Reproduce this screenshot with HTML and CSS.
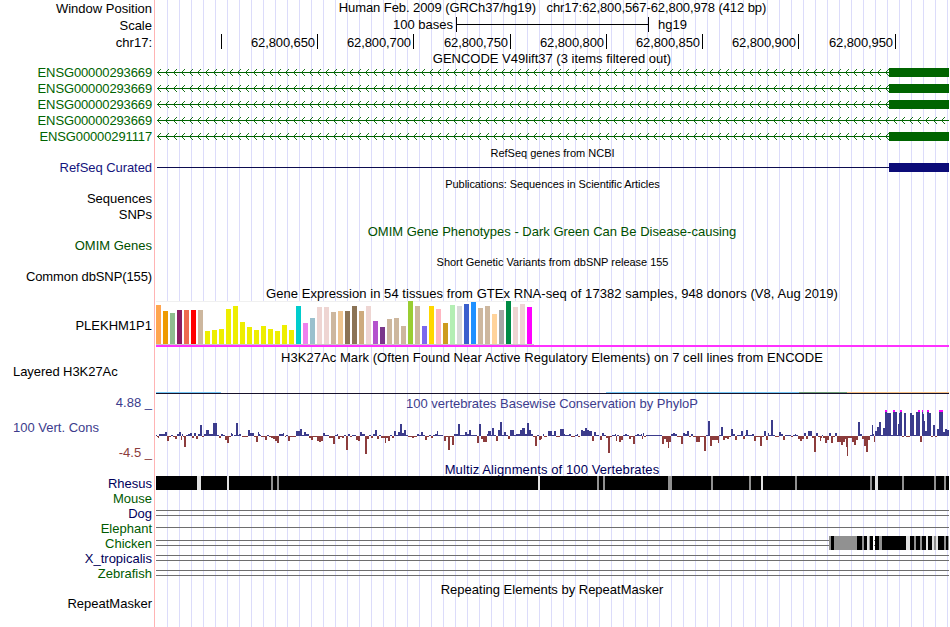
FILE: index.html
```html
<!DOCTYPE html>
<html lang="en">
<head>
<meta charset="utf-8">
<title>Genome Browser hg19 chr17</title>
<link rel="stylesheet" href="styles.css">
</head>
<body>
<svg class="defs" width="0" height="0">
  <defs>
    <pattern id="arrows" x="157" y="0" width="8" height="16" patternUnits="userSpaceOnUse">
      <path d="M4 4L.5 7.5l3.5 3.500" fill="none" stroke="#006400" stroke-width=".9"/>
    </pattern>
    <g id="intron">
      <rect x="157" y="3" width="792" height="9" fill="url(#arrows)"/>
      <path d="M157 7.5H949" stroke="#006400"/>
    </g>
    <g id="exon"><rect x="889" y="3" width="60" height="9"/></g>
    <path id="gap" d="M156 4.5H949M156 9.5H949" stroke="#6e6e6e"/>
  </defs>
</svg>
<main class="browser">
  <div class="row h17"><div class="label">Window Position</div><div class="track title pos">Human Feb. 2009 (GRCh37/hg19) &nbsp; chr17:62,800,567-62,800,978 (412 bp)</div></div>
  <div class="row h17"><div class="label">Scale</div><div class="track">
    <svg viewBox="155 0 794 17"><path d="M456.5 0V15M648.5 0V15M456 7.500H649" stroke="#000"/><text x="453" y="12" text-anchor="end">100 bases</text><text x="658" y="12">hg19</text></svg></div></div>
  <div class="row h17"><div class="label">chr17:</div><div class="track">
    <svg viewBox="155 0 794 17"><path d="M221.500 0v15M317.500 0v15M413.500 0v15M510.500 0v15M606.500 0v15M702.500 0v15M798.500 0v15M895.500 0v15" stroke="#000"/>
    <g class="coords" text-anchor="end"><text x="315" y="13">62,800,650</text><text x="411" y="13">62,800,700</text><text x="508" y="13">62,800,750</text><text x="604" y="13">62,800,800</text><text x="700" y="13">62,800,850</text><text x="796" y="13">62,800,900</text><text x="893" y="13">62,800,950</text></g></svg></div></div>
  <div class="row h14"><div class="label"></div><div class="track title">GENCODE V49lift37 (3 items filtered out)</div></div>
  <div class="row h16 gene"><div class="label">ENSG00000293669</div><div class="track"><svg viewBox="155 0 794 16"><use href="#intron"/><use href="#exon"/></svg></div></div>
  <div class="row h16 gene"><div class="label">ENSG00000293669</div><div class="track"><svg viewBox="155 0 794 16"><use href="#intron"/><use href="#exon"/></svg></div></div>
  <div class="row h16 gene"><div class="label">ENSG00000293669</div><div class="track"><svg viewBox="155 0 794 16"><use href="#intron"/><use href="#exon"/></svg></div></div>
  <div class="row h16 gene"><div class="label">ENSG00000293669</div><div class="track"><svg viewBox="155 0 794 16"><use href="#intron"/></svg></div></div>
  <div class="row h16 gene"><div class="label">ENSG00000291117</div><div class="track"><svg viewBox="155 0 794 16"><use href="#intron"/><use href="#exon"/></svg></div></div>
  <div class="row h15"><div class="label"></div><div class="track title small">RefSeq genes from NCBI</div></div>
  <div class="row h16 refseq"><div class="label">RefSeq Curated</div><div class="track"><svg viewBox="155 0 794 16"><path d="M157 7.500H949" stroke="#0c0c50"/><use href="#exon"/></svg></div></div>
  <div class="row h15"><div class="label"></div><div class="track title small tight">Publications: Sequences in Scientific Articles</div></div>
  <div class="row h16"><div class="label">Sequences</div><div class="track"></div></div>
  <div class="row h15"><div class="label">SNPs</div><div class="track"></div></div>
  <div class="row h16 omim"><div class="label"></div><div class="track title lower">OMIM Gene Phenotypes - Dark Green Can Be Disease-causing</div></div>
  <div class="row h16 omim"><div class="label">OMIM Genes</div><div class="track"></div></div>
  <div class="row h15"><div class="label"></div><div class="track title small snp-title">Short Genetic Variants from dbSNP release 155</div></div>
  <div class="row h16"><div class="label snp">Common dbSNP(155)</div><div class="track"></div></div>
  <div class="row h16"><div class="label"></div><div class="track title wide">Gene Expression in 54 tissues from GTEx RNA-seq of 17382 samples, 948 donors (V8, Aug 2019)</div></div>
  <div class="row h48"><div class="label">PLEKHM1P1</div><div class="track"><svg id="gtex" viewBox="155 0 794 48"></svg></div></div>
  <div class="row h16"><div class="label"></div><div class="track title wide">H3K27Ac Mark (Often Found Near Active Regulatory Elements) on 7 cell lines from ENCODE</div></div>
  <div class="row h29"><div class="label start">Layered H3K27Ac</div><div class="track"><svg viewBox="155 0 794 29">
    <path d="M156 27.500H221M606 27.500H799" stroke="#73c6f5"/><path d="M799 27.500H847" stroke="#6d9c76"/><path d="M847 27.500H949" stroke="#f5be82"/><path d="M156 28.500H949" stroke="#17122a"/></svg></div></div>
  <div class="row h17 cons"><div class="label">4.88 _</div><div class="track title low">100 vertebrates Basewise Conservation by PhyloP</div></div>
  <div class="row h50 cons"><div class="label stack"><span class="name">100 Vert. Cons</span><span class="min">-4.5 _</span></div><div class="track"><svg id="phylop" viewBox="155 0 794 50"></svg></div></div>
  <div class="row h15 navy"><div class="label"></div><div class="track title low multiz">Multiz Alignments of 100 Vertebrates</div></div>
  <div class="row h15 navy"><div class="label">Rhesus</div><div class="track"><svg id="rhesus" viewBox="155 0 794 15"></svg></div></div>
  <div class="row h15 green"><div class="label">Mouse</div><div class="track"></div></div>
  <div class="row h15 navy"><div class="label">Dog</div><div class="track"><svg viewBox="155 0 794 15"><use href="#gap"/></svg></div></div>
  <div class="row h15 green"><div class="label">Elephant</div><div class="track"><svg viewBox="155 0 794 15"><path d="M156 6.500H949" stroke="#6e6e6e"/></svg></div></div>
  <div class="row h15 green"><div class="label">Chicken</div><div class="track"><svg id="chicken" viewBox="155 0 794 15"><use href="#gap"/></svg></div></div>
  <div class="row h15 navy"><div class="label">X_tropicalis</div><div class="track"><svg viewBox="155 0 794 15"><use href="#gap"/></svg></div></div>
  <div class="row h15 green"><div class="label">Zebrafish</div><div class="track"><svg viewBox="155 0 794 15"><use href="#gap"/></svg></div></div>
  <div class="row h15"><div class="label"></div><div class="track title low">Repeating Elements by RepeatMasker</div></div>
  <div class="row h15"><div class="label">RepeatMasker</div><div class="track"></div></div>
</main>
<script src="tracks.js"></script>
</body>
</html>
```
FILE: styles.css
```css
body {
  margin: 0;
  background: #fff;
  color: #000;
  font: 13px "Liberation Sans", Arial, Helvetica, sans-serif;
}
.defs { display: block; position: absolute; }
.browser {
  width: 949px;
  height: 627px;
  overflow: hidden;
  background:
    linear-gradient(#ffb4b4, #ffb4b4) 154px 0 / 1px 100% no-repeat,
    repeating-linear-gradient(90deg, #dcdcfa 0 1px, transparent 1px 12px) 167px 0 no-repeat;
}
.row { display: grid; grid-template-columns: 155px 794px; grid-template-rows: 100%; white-space: nowrap; }
.label { display: flex; align-items: center; justify-content: flex-end; padding-right: 3px; line-height: 15px; }
.h16 .label { align-items: flex-start; }
.label.start { justify-content: flex-start; align-items: flex-start; padding-left: 13px; margin-top: -1px; letter-spacing: -.06px; }
.label.stack { flex-direction: column; align-items: stretch; justify-content: flex-start; padding-left: 13px; }
.name { margin-top: 9px; }
.min { margin-top: 10px; text-align: right; color: #8c3c3c; }
.track { min-width: 0; }
.track svg { display: block; width: 794px; height: 100%; shape-rendering: crispEdges; }
.gene svg { shape-rendering: auto; }
.coords { letter-spacing: -.1px; }
.title { display: flex; align-items: center; justify-content: center; line-height: 15px; }
.pos { align-items: flex-start; letter-spacing: -.08px; padding-left: 1px; }
.small { font-size: 11px; padding: 2px 0 0 1px; }
.tight { letter-spacing: -.07px; }
.snp-title { letter-spacing: -.03px; }
.wide { letter-spacing: .05px; }
.multiz { letter-spacing: .1px; }
.low { padding-top: 1px; }
.lower { padding-top: 2px; }
.snp { letter-spacing: -.11px; }
.h14 { height: 14px; }
.h15 { height: 15px; }
.h16 { height: 16px; }
.h17 { height: 17px; }
.h29 { height: 29px; }
.h48 { height: 48px; }
.h50 { height: 50px; }
.gene { color: #006400; }
.gene .label { letter-spacing: -.13px; }
.gene svg { fill: #006400; }
.refseq { color: #14147d; }
.refseq .label { letter-spacing: -.06px; }
.refseq svg { fill: #0c0c78; }
.omim { color: #005000; }
.cons { color: #3c3c8c; }
.navy { color: #00005a; }
.green { color: #005a00; }
#phylop { overflow: visible; }
```
FILE: tracks.js
```js
const NS = 'http://www.w3.org/2000/svg';
function rect(svg, x, y, w, h, fill) {
  const r = document.createElementNS(NS, 'rect');
  Object.entries({ x, y, width: w, height: h, fill }).forEach(([k, v]) => r.setAttribute(k, v));
  svg.appendChild(r);
}
const byId = id => document.getElementById(id);

// GTEx: one 5px bar per tissue, as colour:height
const gtex = `ffa54f:39 ee9a00:33 8fbc8f:31 8b1c62:34 ee6a50:34 ff0000:34 cdb79e:34
eeee00:13 eeee00:14 eeee00:15 eeee00:35 eeee00:38 eeee00:22 eeee00:17 eeee00:14 eeee00:18 eeee00:15 eeee00:13 eeee00:19 eeee00:14
00cdcd:38 ee82ee:21 9ac0cd:26 eed5d2:37 eed5d2:37 cdb79e:32 eec591:33 8b7355:33 8b7355:38 cdaa7d:33 eed5d2:38 b452cd:23 7a378b:17
cdb79e:25 cdb79e:26 cdb79e:18 9acd32:43 cdb79e:38 7b68ee:18 ffd700:38 ffb6c1:35 cd9b1d:21 b4eeb4:39 d9d9d9:38 3a5fcd:40 1e90ff:42
cdb79e:36 cdb79e:38 ffd39b:30 a6a6a6:34 008b45:43 eed5d2:37 eed5d2:40 ff00ff:37`.split(/\s+/);
const g = byId('gtex');
rect(g, 156, 0, 378, 44, '#fff');
rect(g, 156, 0, 378, 1, '#f0f0f0');
rect(g, 156, 43, 378, 1, '#c8c8c8');
rect(g, 156, 44, 793, 2, '#ff32ff');
gtex.forEach((t, i) => {
  const [c, h] = t.split(':');
  rect(g, 156 + i * 7, 43 - h, 5, +h, '#' + c);
});

// Conservation scores: [origin, "start,width,score ..."] in thirds of a pixel
const scores = [
[150, `18,3,3 21,3,-3 24,3,-6 27,18,6 45,6,12 51,6,-14 57,6,-3 63,6,3 69,6,-3 75,6,-8 81,6,6 87,6,12 93,3,-12 96,3,6 99,3,-3 102,6,-32 108,6,3 114,6,6 120,6,9 126,6,-6 132,6,9 138,6,-8 144,6,6 150,6,33 156,6,-3 162,6,6 168,9,18 177,12,6 189,12,39 201,6,3 207,6,-6 213,6,5 219,6,3 225,6,-11 231,6,-20 237,6,-3 243,3,10 246,3,5 252,6,3 258,6,39 264,3,3 267,6,6 276,18,-3 294,6,18 300,12,9 312,6,-3 318,6,-18 324,3,12 327,3,6 330,3,3 333,12,-3 345,6,-12 351,6,3 357,6,-3 363,6,-6 369,6,-10 375,6,-14 381,6,-21 387,12,6 399,3,9 405,3,-3 408,6,3 414,6,-15 420,18,-3 438,12,15 450,6,21 456,6,3 462,6,12 468,9,6 477,6,-6 483,6,-12 489,12,-3 501,6,-15 507,6,-18 513,6,-15 519,6,9 525,12,3 537,12,-6 549,6,-24 555,6,3 561,3,6 564,6,-9 570,6,-4 576,6,-6 582,6,3 588,6,-42 594,6,6 600,6,-3 606,6,3 612,6,3 618,6,-12 624,6,-15 630,6,12 636,9,6 645,6,-54 651,6,-9 657,6,3 663,6,-6 669,6,6 675,6,18 681,6,-9 687,6,3 693,12,-6 705,3,-20 708,6,-6 714,6,-15 720,6,3 726,6,-6 732,6,15 738,6,3 744,6,12 750,6,36 756,6,9 762,6,18 768,6,3 774,12,-3 786,6,-6 792,9,-3 801,6,6 807,3,3`],
[410, `30,3,3 33,6,12 39,6,3 45,6,-12 51,6,-3 57,6,3 63,6,-6 69,6,3 75,6,6 81,3,15 84,15,3 102,6,-15 108,6,-3 114,6,-42 120,6,-3 126,6,-27 132,12,6 144,6,36 150,15,3 165,6,12 171,6,6 177,6,18 183,18,3 201,6,-21 207,6,36 213,6,-9 219,12,-18 231,3,6 234,9,15 243,3,3 246,6,24 252,6,3 258,6,-15 264,6,18 270,6,42 276,6,3 282,6,12 288,6,3 294,6,-9 300,12,18 312,6,3 318,12,6 330,6,18 336,9,24 345,6,6 351,6,39 357,6,18 363,6,6 369,6,-3 375,6,-30 381,6,3 387,6,-12 393,3,-9 399,3,6 402,9,-3 414,12,15 426,6,3 432,6,15 438,12,-3 450,12,20 462,3,6 465,12,3 477,6,6 483,12,-3 495,6,3 501,3,6 504,6,-3 513,6,18 519,6,15 525,6,24 531,6,18 537,9,15 546,6,-15 552,6,12 558,9,3 570,6,-12 576,6,9 582,6,3 588,6,-6 594,6,-51 600,6,-3 606,6,3 612,3,3 615,3,6 618,3,-14 621,6,3 627,6,-18 633,6,-12 639,6,3 645,6,6 651,6,3 657,6,-9 663,6,-3 669,6,-24 675,6,3 681,6,6 687,6,3 693,3,6 696,3,-9 699,3,9 702,6,-3 708,48,3 756,6,-24 762,6,-9 768,6,-18 774,3,-36 777,3,-18`],
[670, `0,3,-18 3,6,6 9,6,9 15,6,6 21,12,-3 33,6,-24 39,6,9 45,6,6 51,6,15 57,6,-3 63,6,6 69,9,-3 78,12,-18 90,12,-3 102,6,-45 108,6,3 114,6,45 120,6,-30 126,18,-12 144,3,-21 147,6,3 153,6,27 159,6,-12 165,6,-6 171,6,-9 177,6,-3 183,6,21 189,6,6 195,6,-12 201,12,3 213,6,15 219,6,-9 225,3,3 228,6,18 234,12,3 246,6,6 252,6,-15 258,12,-3 270,6,-30 276,6,-3 282,6,15 288,6,-12 294,3,9 297,6,3 303,6,48 309,6,3 315,12,-3 327,6,12 333,6,6 339,6,-12 345,18,3 363,6,-3 369,6,3 375,3,6 378,6,3 384,6,-9 390,6,-15 396,6,-9 402,6,9 408,6,-9 414,12,15 426,6,-6 432,6,-48 438,6,9 444,6,-3 450,3,-15 453,3,-6 456,3,3 459,6,-6 465,6,-21 471,6,-12 477,6,9 483,6,-21 489,6,-3 495,6,9 501,12,-18 513,6,-27 519,6,-18 525,3,-9 528,3,-33 531,3,-60 534,12,-6 546,6,-18 552,6,-27 558,6,-12 564,6,42 570,6,6 576,6,-9 582,6,-30 588,6,-48 594,6,-12 600,6,3 606,3,33 609,3,6 612,3,-18 615,6,15 621,6,27 627,6,42 633,6,3 639,6,24 645,6,78 651,12,69 663,6,3 669,6,78 675,6,72 681,3,3 684,3,36 687,3,69 690,6,78 696,6,-3 702,6,69 708,12,-3 720,6,69 726,6,63 732,6,3 738,6,72 744,6,78 750,6,-18 756,3,78 759,3,66 762,3,45 765,6,15 771,6,78 777,6,69 783,6,-3 789,6,33 795,6,-3 801,6,21 807,12,78 819,6,12 825,6,21 831,6,18`]];
const p = byId('phylop');
scores.forEach(([origin, list]) => list.split(' ').forEach(item => {
  const [x, w, s] = item.split(',').map(Number);
  const px = origin + x / 3, pw = w / 3, h = Math.round(Math.abs(s) / 3);
  if (s < 0) rect(p, px, 25, pw, h, '#8c3c3c');
  else rect(p, px, 25 - Math.min(h, 25), pw, Math.min(h, 25), '#3c3c8c');
  // clipped scores carry a magenta cap
  if (s === 78) rect(p, px, -1, pw, 2, '#ff00ff');
}));

// Alignment blocks: l = light, g = gray, k = black, w = white
function blocks(svg, list) {
  const fill = { l: '#e1e1e1', g: '#919191', k: '#000', w: '#fff' };
  list.split(' ').forEach(b => {
    const [from, to] = b.slice(1).split('-').map(Number);
    rect(svg, from, 0, to - from, 14, fill[b[0]]);
  });
}
blocks(byId('rhesus'), 'k156-949 l197-201 l227-229 g271-273 g277-279 l538-540 g597-599 g603-605 g668-672 g711-713 g749-751 l761-763 g795-797 g870-872 l875-878 g902-904 g934-936 g944-946');
blocks(byId('chicken'), 'k829-949 g829-831 g834-857 g862-864 l867-869 g869-870 w873-875 g879-882 l906-910 g914-916 g920-922 l926-928 l932-934 g934-936 l936-938 g944-946 g948-949');
rect(byId('chicken'), 874, 4, 1, 1, '#6e6e6e');
rect(byId('chicken'), 874, 9, 1, 1, '#6e6e6e');
```
